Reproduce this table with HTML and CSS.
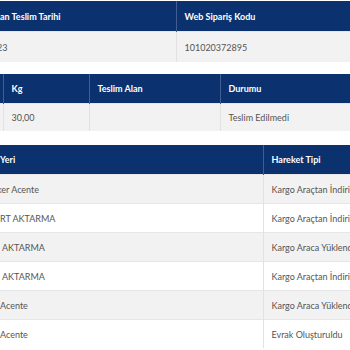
FILE: index.html
```html
<!DOCTYPE html>
<html lang="tr">
<head>
<meta charset="utf-8">
<link rel="stylesheet" href="styles.css">
</head>
<body>
<div class="page">
  <table class="grid t1">
    <colgroup><col class="c-a"><col></colgroup>
    <thead>
      <tr><th class="cut">an Teslim Tarihi</th><th>Web Sipariş Kodu</th></tr>
    </thead>
    <tbody>
      <tr class="odd"><td class="cut cut-3">23</td><td>101020372895</td></tr>
    </tbody>
  </table>

  <table class="grid t2">
    <colgroup><col class="c-x"><col class="c-kg"><col class="c-ta"><col></colgroup>
    <thead>
      <tr><th></th><th>Kg</th><th>Teslim Alan</th><th>Durumu</th></tr>
    </thead>
    <tbody>
      <tr class="odd"><td></td><td>30,00</td><td></td><td>Teslim Edilmedi</td></tr>
    </tbody>
  </table>

  <table class="grid t3">
    <colgroup><col class="c-yer"><col></colgroup>
    <thead>
      <tr><th class="cut">Yeri</th><th>Hareket Tipi</th></tr>
    </thead>
    <tbody>
      <tr class="odd"><td class="cut cut-3">ker Acente</td><td>Kargo Araçtan İndirildi</td></tr>
      <tr><td class="cut">RT AKTARMA</td><td>Kargo Araçtan İndirildi</td></tr>
      <tr class="odd"><td class="cut"> AKTARMA</td><td>Kargo Araca Yüklendi</td></tr>
      <tr><td class="cut"> AKTARMA</td><td>Kargo Araçtan İndirildi</td></tr>
      <tr class="odd"><td class="cut">Acente</td><td>Kargo Araca Yüklendi</td></tr>
      <tr><td class="cut">Acente</td><td>Evrak Oluşturuldu</td></tr>
    </tbody>
  </table>
</div>
</body>
</html>
```
FILE: styles.css
```css
html, body {
  margin: 0;
  padding: 0;
  background: #ffffff;
}
body {
  width: 350px;
  height: 350px;
  overflow: hidden;
  font-family: Lato, "Open Sans", sans-serif;
}
.page {
  width: 420px;
  padding-top: 1px;
  display: flex;
  flex-direction: column;
}
.grid {
  width: 420px;
  border-collapse: collapse;
  table-layout: fixed;
}
.grid th {
  background: #0b326e;
  color: #ffffff;
  font-weight: 700;
  font-size: 9px;
  text-align: left;
  padding: 0 0 0 8px;
  height: 30px;
  white-space: nowrap;
  overflow: hidden;
  border-left: 1px solid #3f5f92;
}
.grid th:first-child { border-left: none; }
.grid td {
  color: #555555;
  font-size: 9px;
  padding: 0 0 0 8px;
  height: 29px;
  white-space: pre;
  overflow: hidden;
  border-left: 1px solid #e2e2e2;
  border-top: 1px solid #e6e6e6;
  background: #ffffff;
}
.grid td:first-child { border-left: none; }
.grid tr.odd td { background: #f2f2f2; }
.grid .cut { padding-left: 0; }
.grid .cut-3 { text-indent: -3px; }

.c-a { width: 176px; }
.c-x { width: 3px; }
.c-kg { width: 86px; }
.c-ta { width: 131px; }
.c-yer { width: 263px; }

.t1 { margin-bottom: 12px; }
.t1 td { height: 30px; }
.t2 { margin-bottom: 14px; }
.t2 th { height: 29px; }
.t2 td { height: 27px; }
.t2 th:first-child { padding: 0; }
.t2 td:first-child { padding: 0; }
.t3 th { height: 29px; }
.t3 td { height: 28px; }
```
